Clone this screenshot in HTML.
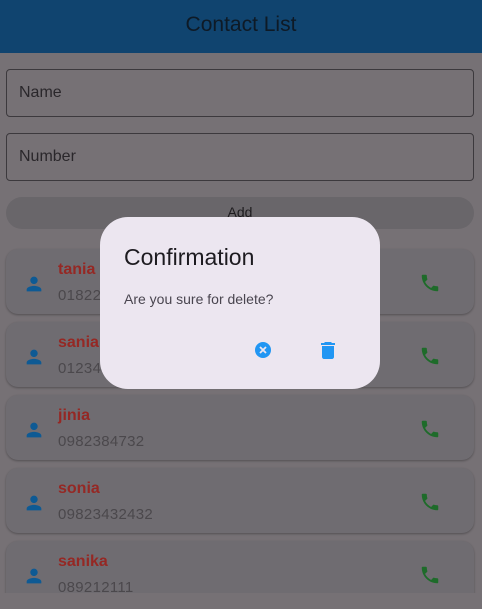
<!DOCTYPE html>
<html><head><meta charset="utf-8"><style>
*{margin:0;padding:0;box-sizing:border-box}
body{width:482px;height:609px;overflow:hidden;background:#767175;font-family:"Liberation Sans",Roboto,sans-serif;position:relative}
.bar{position:absolute;left:0;top:0;width:482px;height:53px;background:#10446f;color:#0e1a26;font-size:21px;text-align:center;line-height:49px}
.field{position:absolute;left:6px;width:468px;height:48px;border:1px solid #3c393d;border-radius:4px;color:#2a272b;font-size:16px;padding-left:12px;line-height:46px}
.add{position:absolute;left:6px;top:197px;width:468px;height:32px;border-radius:16px;background:#69666a;text-align:center;font-size:14px;color:#1e1c1f;line-height:30px}
.list{position:absolute;left:0;top:240px;width:482px;height:353px;overflow:hidden}
.card{position:absolute;left:6px;width:468px;height:65px;background:#6f6c71;border-radius:12px;box-shadow:0 1px 2px rgba(0,0,0,.3)}
.nm{position:absolute;left:52px;top:12px;font-size:16px;font-weight:bold;color:#952824}
.num{position:absolute;left:52px;top:38px;font-size:15px;color:#4b484c;letter-spacing:.3px}
.pi{position:absolute;left:17px;top:24px}
.ph{position:absolute;left:413px;top:23px}
.dlg{position:absolute;left:100px;top:217px;width:280px;height:172px;background:#ece6f0;border-radius:28px}
.dt{position:absolute;left:24px;top:27px;font-size:23px;color:#1d1b20}
.dm{position:absolute;left:24px;top:74px;font-size:14px;color:#49454f}
</style></head><body>
<div class="bar">Contact List</div>
<div class="field" style="top:69px">Name</div>
<div class="field" style="top:133px">Number</div>
<div class="add">Add</div>
<div class="list">
<div class="card" style="top:9px"><svg class="pi" width="22" height="22" viewBox="0 0 24 24"><path fill="#0e5a94" d="M12 12c2.2 0 4-1.8 4-4s-1.8-4-4-4-4 1.8-4 4 1.8 4 4 4zm0 2c-2.7 0-8 1.3-8 4v2h16v-2c0-2.7-5.3-4-8-4z"/></svg><div class="nm">tania</div><div class="num">01822</div><svg class="ph" width="22" height="22" viewBox="0 0 24 24"><path fill="#1e6b2a" d="M6.6 10.8c1.4 2.8 3.8 5.1 6.6 6.6l2.2-2.2c.3-.3.7-.4 1-.2 1.1.4 2.3.6 3.6.6.6 0 1 .4 1 1V20c0 .6-.4 1-1 1C10.6 21 3 13.4 3 4c0-.6.4-1 1-1h3.5c.6 0 1 .4 1 1 0 1.3.2 2.5.6 3.6.1.3 0 .7-.2 1z"/></svg></div>
<div class="card" style="top:82px"><svg class="pi" width="22" height="22" viewBox="0 0 24 24"><path fill="#0e5a94" d="M12 12c2.2 0 4-1.8 4-4s-1.8-4-4-4-4 1.8-4 4 1.8 4 4 4zm0 2c-2.7 0-8 1.3-8 4v2h16v-2c0-2.7-5.3-4-8-4z"/></svg><div class="nm">sania</div><div class="num">01234</div><svg class="ph" width="22" height="22" viewBox="0 0 24 24"><path fill="#1e6b2a" d="M6.6 10.8c1.4 2.8 3.8 5.1 6.6 6.6l2.2-2.2c.3-.3.7-.4 1-.2 1.1.4 2.3.6 3.6.6.6 0 1 .4 1 1V20c0 .6-.4 1-1 1C10.6 21 3 13.4 3 4c0-.6.4-1 1-1h3.5c.6 0 1 .4 1 1 0 1.3.2 2.5.6 3.6.1.3 0 .7-.2 1z"/></svg></div>
<div class="card" style="top:155px"><svg class="pi" width="22" height="22" viewBox="0 0 24 24"><path fill="#0e5a94" d="M12 12c2.2 0 4-1.8 4-4s-1.8-4-4-4-4 1.8-4 4 1.8 4 4 4zm0 2c-2.7 0-8 1.3-8 4v2h16v-2c0-2.7-5.3-4-8-4z"/></svg><div class="nm">jinia</div><div class="num">0982384732</div><svg class="ph" width="22" height="22" viewBox="0 0 24 24"><path fill="#1e6b2a" d="M6.6 10.8c1.4 2.8 3.8 5.1 6.6 6.6l2.2-2.2c.3-.3.7-.4 1-.2 1.1.4 2.3.6 3.6.6.6 0 1 .4 1 1V20c0 .6-.4 1-1 1C10.6 21 3 13.4 3 4c0-.6.4-1 1-1h3.5c.6 0 1 .4 1 1 0 1.3.2 2.5.6 3.6.1.3 0 .7-.2 1z"/></svg></div>
<div class="card" style="top:228px"><svg class="pi" width="22" height="22" viewBox="0 0 24 24"><path fill="#0e5a94" d="M12 12c2.2 0 4-1.8 4-4s-1.8-4-4-4-4 1.8-4 4 1.8 4 4 4zm0 2c-2.7 0-8 1.3-8 4v2h16v-2c0-2.7-5.3-4-8-4z"/></svg><div class="nm">sonia</div><div class="num">09823432432</div><svg class="ph" width="22" height="22" viewBox="0 0 24 24"><path fill="#1e6b2a" d="M6.6 10.8c1.4 2.8 3.8 5.1 6.6 6.6l2.2-2.2c.3-.3.7-.4 1-.2 1.1.4 2.3.6 3.6.6.6 0 1 .4 1 1V20c0 .6-.4 1-1 1C10.6 21 3 13.4 3 4c0-.6.4-1 1-1h3.5c.6 0 1 .4 1 1 0 1.3.2 2.5.6 3.6.1.3 0 .7-.2 1z"/></svg></div>
<div class="card" style="top:301px"><svg class="pi" width="22" height="22" viewBox="0 0 24 24"><path fill="#0e5a94" d="M12 12c2.2 0 4-1.8 4-4s-1.8-4-4-4-4 1.8-4 4 1.8 4 4 4zm0 2c-2.7 0-8 1.3-8 4v2h16v-2c0-2.7-5.3-4-8-4z"/></svg><div class="nm">sanika</div><div class="num">089212111</div><svg class="ph" width="22" height="22" viewBox="0 0 24 24"><path fill="#1e6b2a" d="M6.6 10.8c1.4 2.8 3.8 5.1 6.6 6.6l2.2-2.2c.3-.3.7-.4 1-.2 1.1.4 2.3.6 3.6.6.6 0 1 .4 1 1V20c0 .6-.4 1-1 1C10.6 21 3 13.4 3 4c0-.6.4-1 1-1h3.5c.6 0 1 .4 1 1 0 1.3.2 2.5.6 3.6.1.3 0 .7-.2 1z"/></svg></div>
</div>
<div class="dlg">
<div class="dt">Confirmation</div>
<div class="dm">Are you sure for delete?</div>
<svg style="position:absolute;left:155px;top:125px" width="16" height="16" viewBox="0 0 16 16"><circle cx="8" cy="8" r="8" fill="#2196f3"/><path d="M5 5l6 6M11 5l-6 6" stroke="#ece6f0" stroke-width="1.8"/></svg>
<svg style="position:absolute;left:220px;top:124px" width="16" height="18" viewBox="0 0 16 18"><path fill="#2196f3" d="M5 1h6l1 1h3v2H1V2h3zM2 5h12v11c0 1-1 2-2 2H4c-1 0-2-1-2-2z"/></svg>
</div>
</body></html>
